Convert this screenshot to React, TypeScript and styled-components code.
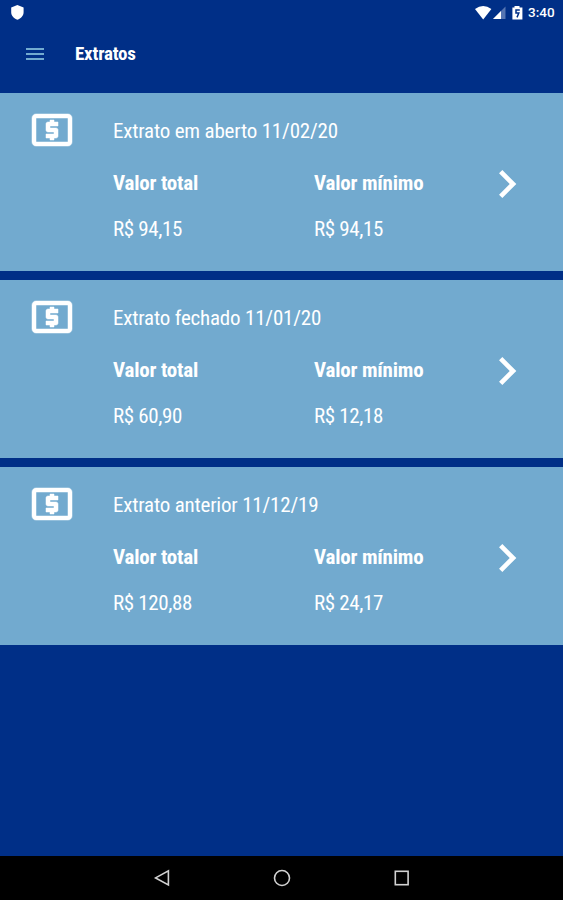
import React from "react";
import styled, { createGlobalStyle } from "styled-components";

const GlobalStyle = createGlobalStyle`
  * { box-sizing: border-box; }
  body {
    margin: 0;
    background: #002f87;
    font-family: "Roboto Condensed", Roboto, "Liberation Sans", sans-serif;
    font-stretch: 75%;
    color: #fff;
  }
`;

const Screen = styled.div`
  display: flex;
  flex-direction: column;
  width: 563px;
  height: 900px;
  overflow: hidden;
  background: #002f87;
`;

const StatusBar = styled.div`
  display: flex;
  align-items: center;
  justify-content: space-between;
  flex: none;
  height: 25px;
  padding: 0 8px 0 11px;
`;

const StatusIcons = styled.div`
  display: flex;
  align-items: center;
  height: 25px;
`;

const Clock = styled.span`
  width: 27px;
  margin-left: 4px;
  font-family: Roboto, "Liberation Sans", sans-serif;
  font-size: 13.5px;
  font-weight: 500;
  font-stretch: 100%;
  line-height: 25px;
  white-space: nowrap;
`;

const AppBar = styled.header`
  display: flex;
  align-items: center;
  flex: none;
  height: 67.6px;
  padding: 0 0 9.6px 23px;
`;

const MenuIcon = styled.svg`
  display: block;
  width: 24px;
  height: 24px;
  fill: #72abd0;
`;

const Title = styled.h1`
  margin: 0 0 0 28px;
  font-size: 19px;
  font-weight: 700;
  line-height: 24px;
  letter-spacing: -0.2px;
`;

const StatementList = styled.main`
  display: flex;
  flex-direction: column;
  gap: 9px;
  flex: 1;
`;

const Card = styled.section`
  display: grid;
  grid-template-columns: 85px 1fr 84px;
  flex: none;
  height: 178px;
  padding-left: 28px;
  background: #72aacf;
`;

const AtmIcon = styled.svg`
  display: block;
  width: 48px;
  height: 48px;
  margin-top: 13.6px;
  fill: #fff;
  stroke: #fff;
  stroke-width: 0.25;
`;

const Chevron = styled.svg`
  display: block;
  width: 56px;
  height: 56px;
  margin-top: 63.4px;
  fill: #fff;
`;

const Details = styled.div`
  padding-top: 23px;
`;

const Line = styled.div<{ $bold?: boolean; $tracking?: number }>`
  font-size: 21px;
  line-height: 30px;
  font-weight: ${(p) => (p.$bold ? 700 : 400)};
  letter-spacing: ${(p) => p.$tracking ?? -0.2}px;
  white-space: nowrap;
`;

const Amounts = styled.div`
  display: grid;
  grid-template-columns: 201px 1fr;
  row-gap: 16px;
  margin-top: 22px;
`;

const NavBar = styled.nav`
  display: flex;
  align-items: center;
  flex: none;
  justify-content: center;
  gap: 96px;
  height: 44px;
  background: #000;
`;

const NavIcon = styled.svg`
  display: block;
  width: 24px;
  height: 24px;
  fill: none;
  stroke: #d2d2d2;
  stroke-width: 1.6;
`;

const statements = [
  { title: "Extrato em aberto 11/02/20", total: "R$ 94,15", minimum: "R$ 94,15" },
  { title: "Extrato fechado 11/01/20", total: "R$ 60,90", minimum: "R$ 12,18" },
  { title: "Extrato anterior 11/12/19", total: "R$ 120,88", minimum: "R$ 24,17" },
];

export default function App() {
  return (
    <>
      <GlobalStyle />
      <Screen>
        <StatusBar>
          <svg width="13" height="15" viewBox="0 0 13 15" fill="#fff">
            <path d="M6.4 0 L12.6 2.4 V7 C12.6 10.8 10 13.6 6.4 14.8 C2.8 13.6 .2 10.8 .2 7 V2.4 Z" />
          </svg>
          <StatusIcons>
            <svg width="49" height="16" viewBox="0 0 49 16">
              <path d="M0 4 Q8.2 -2.2 16.4 4 L8.2 14.4Z" fill="#fff" />
              <path d="M18 14 L30.5 1.5 V14Z" fill="#5575b2" />
              <path d="M18 14 L26 6 V14Z" fill="#fff" />
              <path d="M39.5 1 H44.5 V2.5 H47.4 V14.5 H37.4 V2.5 H39.5Z" fill="#fff" />
              <path d="M44.8 5 H41 V8 H43.8 L42 12.4" fill="none" stroke="#002f87" strokeWidth="1.5" />
            </svg>
            <Clock>3:40</Clock>
          </StatusIcons>
        </StatusBar>
        <AppBar>
          <MenuIcon viewBox="0 0 24 24">
            <path d="M3 18h18v-2H3v2zm0-5h18v-2H3v2zm0-7v2h18V6H3z" />
          </MenuIcon>
          <Title>Extratos</Title>
        </AppBar>
        <StatementList>
          {statements.map((s) => (
            <Card key={s.title}>
              <AtmIcon viewBox="0 0 24 24">
                <path d="M11 17h2v-1h1c.55 0 1-.45 1-1v-3c0-.55-.45-1-1-1h-3v-1h4V8h-2V7h-2v1h-1c-.55 0-1 .45-1 1v3c0 .55.45 1 1 1h3v1H9v2h2v1zm9-13H4c-1.11 0-1.99.89-1.99 2L2 18c0 1.11.89 2 2 2h16c1.11 0 2-.89 2-2V6c0-1.11-.89-2-2-2zm0 14H4V6h16v12z" />
              </AtmIcon>
              <Details>
                <Line>{s.title}</Line>
                <Amounts>
                  <Line $bold>Valor total</Line>
                  <Line $bold>Valor mínimo</Line>
                  <Line $tracking={-0.38}>{s.total}</Line>
                  <Line $tracking={-0.38}>{s.minimum}</Line>
                </Amounts>
              </Details>
              <Chevron viewBox="0 0 24 24">
                <path d="M10 6 8.59 7.41 13.17 12l-4.58 4.59L10 18l6-6z" />
              </Chevron>
            </Card>
          ))}
        </StatementList>
        <NavBar>
          <NavIcon viewBox="0 0 24 24">
            <path d="M5.6 11.9 L18.4 4.8 V19Z" />
          </NavIcon>
          <NavIcon viewBox="0 0 24 24">
            <circle cx="12" cy="12" r="7.5" />
          </NavIcon>
          <NavIcon viewBox="0 0 24 24">
            <rect x="5.3" y="5.3" width="12.8" height="13.4" />
          </NavIcon>
        </NavBar>
      </Screen>
    </>
  );
}
